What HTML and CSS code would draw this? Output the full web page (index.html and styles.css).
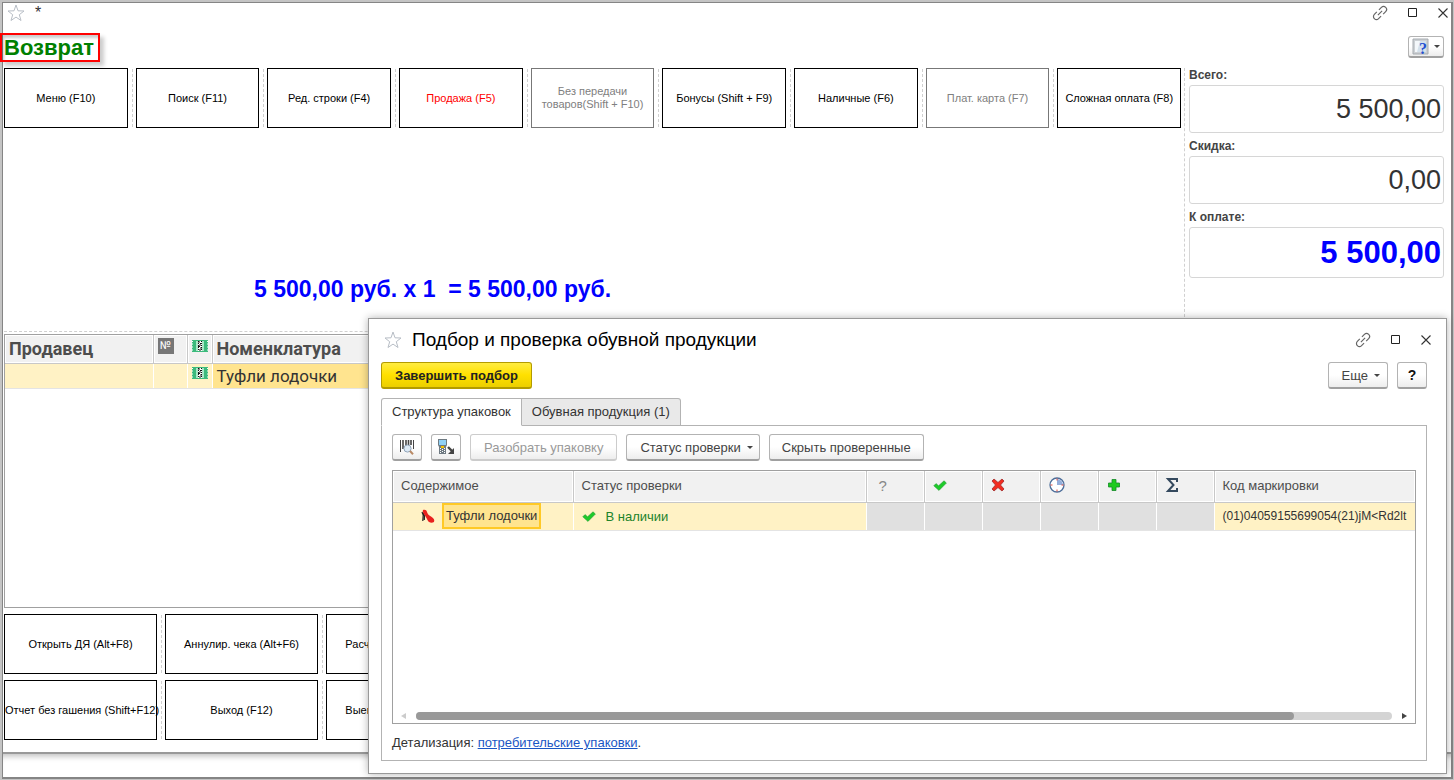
FILE: index.html
```
<!DOCTYPE html>
<html lang="ru">
<head>
  <meta charset="UTF-8" />
  <meta name="viewport" content="width=device-width, initial-scale=1.0"/>
  <title>Возврат</title>
  <link rel="stylesheet" href="styles.css">
</head>
<body>
  <svg class="sprite" aria-hidden="true">
    <symbol id="star" viewBox="0 0 18 18"><path d="M9 1l2 5.800 6 .2-4.700 3.700 1.700 5.800L9 13.100 4 16.500l1.700-5.800L1 7l6-.2z" fill="#fff" stroke="#b8bec6"/></symbol>
    <symbol id="link" viewBox="0 0 16 16"><g transform="rotate(-45 8 8)" fill="none" stroke="#666" stroke-width="1.200"><path d="M6.500 5H3a3 3 0 0 0 0 6h3.500M9.500 5H13a3 3 0 0 1 0 6H9.500M5 8h6"/></g></symbol>
    <symbol id="max" viewBox="0 0 10 10"><path d="M.5.5h8v8h-8z" fill="none" stroke="#222"/></symbol>
    <symbol id="close" viewBox="0 0 10 10"><path d="M.5.5l9 9M9.500.5l-9 9" stroke="#333" stroke-width="1.100"/></symbol>
    <symbol id="check" viewBox="0 0 14 11"><path d="M.8 5.800l2.200-2.200 2.600 2.200L11 .8l2.400 2.200L6 10.400z" fill="#1ecb2a" stroke="#2c9a3a" stroke-width=".6"/></symbol>
    <symbol id="mark" viewBox="0 0 16 12"><path d="M0 0h16v12H0z" fill="#3cba7c"/><path d="M4 1h8v10H4z" fill="#a8e6c6"/><path d="M0 1.500h1M0 4h1M0 7h1M0 10h1M15 1.500h1M15 4h1M15 7h1M15 10h1" stroke="#fff"/><path d="M6 1h4v10H6z" fill="#fff"/><path d="M6.500 1v10M9.500 1v10" stroke="#111" stroke-dasharray="1 1"/><path d="M6 2h2M8 3.500h2M7 5h2M6 6.500h2M8 8h2M7 10h2" stroke="#111"/></symbol>
  </svg>

  <div class="window">
    <header class="titlebar">
      <button class="icon-btn" aria-label="В избранное"><svg width="18" height="18"><use href="#star"/></svg></button>
      <span class="modified">*</span>
      <div class="win-controls">
        <button class="icon-btn" aria-label="Ссылка"><svg width="16" height="16"><use href="#link"/></svg></button>
        <button class="icon-btn" aria-label="Развернуть"><svg width="10" height="10"><use href="#max"/></svg></button>
        <button class="icon-btn" aria-label="Закрыть"><svg width="10" height="10"><use href="#close"/></svg></button>
      </div>
    </header>

    <div class="heading">
      <h1>Возврат</h1>
      <button class="btn help-btn" aria-label="Справка">
        <svg width="18" height="18" viewBox="0 0 18 18"><path d="M1 1h15v15H1z" fill="#ccd0d4" stroke="#a6abb0"/><path d="M3 3h10v11H3z" fill="#f4f8fb"/><path d="M8 3h6v11H5z" fill="#d4e1ec"/><text x="7" y="16" class="help-mark">?</text></svg>
        <span class="caret"></span>
      </button>
    </div>

    <main class="layout">
      <section class="sale">
        <nav class="keys">
          <button>Меню (F10)</button>
          <button>Поиск (F11)</button>
          <button>Ред. строки (F4)</button>
          <button class="active">Продажа (F5)</button>
          <button disabled>Без передачи товаров(Shift + F10)</button>
          <button>Бонусы (Shift + F9)</button>
          <button>Наличные (F6)</button>
          <button disabled>Плат. карта (F7)</button>
          <button>Сложная оплата (F8)</button>
        </nav>
        <p class="amount">5 500,00 руб. x 1&nbsp; = 5 500,00 руб.</p>
      </section>
      <aside class="totals">
        <label for="total">Всего:</label>
        <input id="total" value="5 500,00" readonly>
        <label for="discount">Скидка:</label>
        <input id="discount" value="0,00" readonly>
        <label for="topay">К оплате:</label>
        <input id="topay" class="topay" value="5 500,00" readonly>
      </aside>
    </main>

    <div class="goods">
      <table>
        <colgroup><col class="c-seller"><col class="c-num"><col class="c-mark"><col></colgroup>
        <thead>
          <tr>
            <th>Продавец</th>
            <th class="ico"><span class="num">№</span></th>
            <th class="ico"><svg width="16" height="12"><use href="#mark"/></svg></th>
            <th>Номенклатура</th>
          </tr>
        </thead>
        <tbody>
          <tr>
            <td></td>
            <td></td>
            <td class="ico"><svg width="16" height="12"><use href="#mark"/></svg></td>
            <td class="current">Туфли лодочки</td>
          </tr>
        </tbody>
      </table>
    </div>

    <nav class="keys keys-bottom">
      <button>Открыть ДЯ (Alt+F8)</button>
      <button>Аннулир. чека (Alt+F6)</button>
      <button>Расчет скидок (Alt+F7)</button>
    </nav>
    <nav class="keys keys-bottom">
      <button>Отчет без гашения (Shift+F12)</button>
      <button>Выход (F12)</button>
      <button>Выемка денег (Alt+F5)</button>
    </nav>
    <footer class="status"></footer>
  </div>

  <div class="dialog" role="dialog" aria-labelledby="dialogTitle">
    <header class="dialog-title">
      <button class="icon-btn" aria-label="В избранное"><svg width="18" height="18"><use href="#star"/></svg></button>
      <h2 id="dialogTitle">Подбор и проверка обувной продукции</h2>
      <div class="win-controls">
        <button class="icon-btn" aria-label="Ссылка"><svg width="16" height="16"><use href="#link"/></svg></button>
        <button class="icon-btn" aria-label="Развернуть"><svg width="10" height="10"><use href="#max"/></svg></button>
        <button class="icon-btn" aria-label="Закрыть"><svg width="10" height="10"><use href="#close"/></svg></button>
      </div>
    </header>
    <div class="commands">
      <button class="btn primary">Завершить подбор</button>
      <button class="btn more">Еще <span class="caret"></span></button>
      <button class="btn square help">?</button>
    </div>

    <div class="tabs">
      <button class="tab selected">Структура упаковок</button>
      <button class="tab">Обувная продукция (1)</button>
    </div>
    <div class="panel">
      <div class="toolbar">
        <button class="btn square" aria-label="Поиск по штрихкоду">
          <svg width="16" height="16" viewBox="0 0 16 16"><path d="M1.500 1v12M14.500 1v9" stroke="#444"/><path d="M4 1v9M7 1v6M9.500 1v5M12 1v5" stroke="#444" stroke-width="1.600"/><circle cx="8.500" cy="9.500" r="3.600" fill="#dce9f5" stroke="#8fa3b8"/><path d="M11 12l3 3.200" stroke="#b98a66" stroke-width="2"/></svg>
        </button>
        <button class="btn square" aria-label="Загрузить из ТСД">
          <svg width="18" height="18" viewBox="0 0 18 18"><path d="M1 1h9v6L9 9v7H2V9L1 7z" fill="#6f7a82"/><path d="M2 2h7v5H2z" fill="#8fd0f5"/><path d="M4 8h3v2H4z" fill="#f5c400"/><path d="M3 10h1v1H3zM5 11h1v1H5zM7 10h1v1H7zM3 12h1v1H3zM5 13h1v1H5zM7 12h1v1H7zM3 14h1v1H3zM7 14h1v1H7z" fill="#fff"/><path d="M11 9l4 4" stroke="#444" stroke-width="2.400"/><path d="M17 10v6h-6z" fill="#444"/></svg>
        </button>
        <button class="btn" disabled>Разобрать упаковку</button>
        <button class="btn drop">Статус проверки <span class="caret"></span></button>
        <button class="btn">Скрыть проверенные</button>
      </div>

      <div class="grid">
        <table>
          <colgroup><col class="g-name"><col class="g-status"><col class="g-ico"><col class="g-ico"><col class="g-ico"><col class="g-ico"><col class="g-ico"><col class="g-ico"><col></colgroup>
          <thead>
            <tr>
              <th>Содержимое</th>
              <th>Статус проверки</th>
              <th class="ico quest">?</th>
              <th class="ico"><svg width="14" height="11"><use href="#check"/></svg></th>
              <th class="ico"><svg width="14" height="14" viewBox="0 0 14 14"><path d="M3 1l4 3.500L11 1l2 2-3.500 4 3.500 4-2 2-4-3.500L3 13l-2-2 3.500-4L1 3z" fill="#f22c20" stroke="#a12a2a" stroke-width=".8"/></svg></th>
              <th class="ico"><svg width="16" height="16" viewBox="0 0 16 16"><circle cx="8" cy="8" r="7" fill="#fff" stroke="#4b6d99" stroke-width="1.300"/><path d="M8 8V2a6 6 0 0 1 6 6z" fill="#94aedb"/><path d="M8 1.500v2M8 12.500v2M1.500 8h2M12.500 8h2" stroke="#e14a3c"/></svg></th>
              <th class="ico"><svg width="14" height="14" viewBox="0 0 14 14"><path d="M5 1.500h4V5h3.500v4H9v3.500H5V9H1.500V5H5z" fill="#1ecb1e" stroke="#148a28" stroke-width=".8"/></svg></th>
              <th class="ico"><svg width="14" height="16" viewBox="0 0 14 16"><path d="M12 5V2H3l5.500 6L3 14h9v-3" fill="none" stroke="#34495e" stroke-width="2"/></svg></th>
              <th>Код маркировки</th>
            </tr>
          </thead>
          <tbody>
            <tr>
              <td class="name">
                <div class="item">
                  <svg width="14" height="15" viewBox="0 0 14 15"><path d="M1 3l1.200 3-.4 6M2.500 4l1 3-.2 4" fill="none" stroke="#222" stroke-width="1.200"/><path d="M2 1c2-.8 3.500 0 4 2s1.500 3 4 4.500S14 10.500 13 13c-2.500 1.500-5.500.5-6.500-2S4.500 7.500 3.500 6 1.200 2.500 2 1z" fill="#e8201e"/></svg>
                  <span class="focus">Туфли лодочки</span>
                </div>
              </td>
              <td class="status-ok"><svg width="14" height="11"><use href="#check"/></svg>В наличии</td>
              <td class="off"></td>
              <td class="off"></td>
              <td class="off"></td>
              <td class="off"></td>
              <td class="off"></td>
              <td class="off"></td>
              <td class="code">(01)04059155699054(21)jM&lt;Rd2lt</td>
            </tr>
          </tbody>
        </table>
        <div class="scroll">
          <span class="arrow left"></span>
          <div class="track"><div class="thumb"></div></div>
          <span class="arrow right"></span>
        </div>
      </div>

      <p class="details">Детализация: <a href="#">потребительские упаковки</a>.</p>
    </div>
  </div>
</body>
</html>
```
FILE: styles.css
```
* {
  box-sizing: border-box;
}
body {
  margin: 0;
  padding: 2px 1px 1px 2px;
  min-height: 100vh;
  display: flex;
  position: relative;
  background: #c4c4c4;
  color: #333;
  font-family: "Liberation Sans", Arial, sans-serif;
  font-size: 13px;
  overflow: hidden;
}
button, input {
  font: inherit;
  color: inherit;
}
h1, h2, p {
  margin: 0;
}
.sprite {
  position: absolute;
  width: 0;
  height: 0;
}
.window {
  flex: 1;
  display: flex;
  flex-direction: column;
  min-width: 0;
  background: #fff;
  border: 2px solid #858585;
  border-width: 1px 2px 2px 1px;
}
.icon-btn {
  display: flex;
  padding: 0;
  border: 0;
  background: none;
}
.titlebar {
  display: flex;
  align-items: center;
  height: 20px;
  padding: 0 3px 0 4px;
}
.modified {
  margin-left: 10px;
  font-size: 16px;
}
.win-controls {
  display: flex;
  align-items: center;
  gap: 20px;
  margin-left: auto;
}

/* heading */
.heading {
  display: flex;
  justify-content: space-between;
  align-items: center;
  height: 45px;
  padding: 3px 7px 0 0;
}
h1 {
  margin-left: -3px;
  padding: 1px 4px 0 2px;
  border: 2px solid #f00;
  box-shadow: 4px 4px 4px rgba(0, 0, 0, 0.2), inset 2px 3px 3px rgba(0, 0, 0, 0.2);
  color: #008000;
  font-size: 22px;
  line-height: 24px;
}
.btn {
  display: flex;
  align-items: center;
  justify-content: center;
  height: 27px;
  padding: 0 13px;
  border: 1px solid #b3b3b3;
  border-bottom: 2px solid #a0a0a0;
  border-radius: 3px;
  background: linear-gradient(#fff 50%, #ededed);
  color: #444;
  white-space: nowrap;
}
.btn:disabled {
  color: #999;
  border-color: #ccc;
}
.help-btn {
  height: 22px;
  padding: 0 3px;
}
.help-btn .caret {
  margin-left: 4px;
}
.help-mark {
  fill: #1f4fd0;
  font: bold 16px "Liberation Serif", serif;
}
.caret {
  margin-left: 6px;
  border: 3px solid transparent;
  border-top-color: #444;
  border-bottom: 0;
}

/* sale area */
.layout {
  display: flex;
  padding: 0 7px 0 1px;
}
.sale {
  flex: 1;
  display: flex;
  flex-direction: column;
  height: 264px;
  padding-right: 3px;
  border-bottom: 1px dashed #d0d0d0;
}
.keys {
  display: flex;
}
.keys button {
  flex: 1;
  position: relative;
  height: 60px;
  padding: 0;
  border: 1px solid #000;
  background: #fff;
  color: #000;
  font-size: 11px;
  line-height: 13px;
}
.keys button + button {
  margin-left: 8px;
}
.keys button + button::before {
  content: "";
  position: absolute;
  left: -5px;
  top: 0;
  bottom: 0;
  border-left: 1px dashed #d0d0d0;
}
.keys .active {
  color: #f00;
}
.keys button:disabled {
  border-color: #777;
  color: #808080;
}
.amount {
  margin: auto 0 29px 250px;
  color: #00f;
  font-size: 23px;
  line-height: 26px;
  font-weight: bold;
}
.totals {
  display: flex;
  flex-direction: column;
  width: 260px;
  padding-left: 4px;
  border-left: 1px dashed #d0d0d0;
}
.totals label {
  height: 17px;
  color: #444;
  font-size: 12px;
  line-height: 14px;
  font-weight: bold;
}
.totals input {
  width: 100%;
  height: 48px;
  margin-bottom: 6px;
  padding: 0 2px;
  border: 1px solid #d6d6d6;
  border-radius: 3px;
  color: #333;
  font-size: 27px;
  text-align: right;
}
.totals .topay {
  height: 51px;
  color: #00f;
  font-size: 31px;
  font-weight: bold;
}

table {
  width: 100%;
  border-collapse: collapse;
  table-layout: fixed;
}
th {
  background: #f1f1f1;
  border-right: 1px solid #c8c8c8;
  box-shadow: inset 0 0 0 1px #fff;
  color: #4d4d4d;
  text-align: left;
  white-space: nowrap;
}
td {
  background: #fff2c5;
  border-right: 1px solid #fff;
  white-space: nowrap;
}

/* goods in the receipt */
.goods {
  flex: 1;
  margin: 2px 7px 0 1px;
  border: 1px solid #a0a0a0;
}
.goods th, .goods td {
  height: 28px;
  padding: 0 4px;
  font-family: Roboto, sans-serif;
  font-size: 17px;
}
.goods th {
  font-size: 18px;
  line-height: 20px;
  border-bottom: 1px solid #c8c8c8;
}
.goods td {
  height: 25px;
  border-bottom: 1px solid #e4e4e4;
}
.goods .current {
  background: #ffe48f;
}
.goods .ico {
  padding-top: 3px;
  vertical-align: top;
}
.goods svg {
  display: block;
}
.goods th svg {
  margin-top: 2px;
}
.c-seller {
  width: 148px;
}
.c-num {
  width: 34px;
}
.c-mark {
  width: 25px;
}
.num {
  display: block;
  width: 16px;
  height: 16px;
  background: #777;
  color: #fff;
  font-size: 11px;
  line-height: 16px;
  font-weight: normal;
  text-align: center;
}
.keys-bottom {
  margin: 6px 0 0 1px;
}
.keys-bottom button {
  flex: 0 0 153px;
  min-width: 0;
  white-space: nowrap;
}
.status {
  height: 25px;
  margin-top: 12px;
  border-top: 2px solid #999;
  box-shadow: inset 0 7px 6px -5px #bbb;
}

/* dialog window */
.dialog {
  position: absolute;
  left: 368px;
  top: 318px;
  right: 7px;
  bottom: 6px;
  display: flex;
  flex-direction: column;
  padding: 0 19px 12px 12px;
  border: 1px solid #999;
  background: #fff;
  box-shadow: 0 0 8px rgba(0, 0, 0, 0.3);
}
.dialog-title {
  display: flex;
  align-items: center;
  height: 43px;
  padding: 0 0 2px 3px;
}
.dialog-title .win-controls {
  margin-right: -4px;
}
h2 {
  margin-left: 10px;
  color: #000;
  font-size: 19px;
  font-weight: normal;
}
.commands {
  display: flex;
  gap: 9px;
}
.primary {
  border-color: #b39b00;
  background: linear-gradient(#ffec40, #ffe000 50%, #eccf00);
  color: #222;
  font-weight: bold;
}
.more {
  margin-left: auto;
  padding: 0 7px 0 13px;
}
.square {
  width: 30px;
  padding: 0;
}
.help {
  color: #111;
  font-size: 14px;
  font-weight: bold;
}
.tabs {
  display: flex;
  position: relative;
  z-index: 1;
  margin-top: 9px;
}
.tab {
  height: 28px;
  padding: 0 10px 2px;
  border: 1px solid #b3b3b3;
  border-left: 0;
  border-radius: 0 3px 0 0;
  background: #e9e9e9;
}
.tab.selected {
  border-left: 1px solid #b3b3b3;
  border-bottom-color: #fff;
  border-radius: 3px 0 0 0;
  background: #fff;
}
.panel {
  flex: 1;
  display: flex;
  flex-direction: column;
  margin-top: -1px;
  padding: 8px 10px 9px;
  border: 1px solid #b3b3b3;
}
.toolbar {
  display: flex;
  gap: 9px;
}
.toolbar .btn {
  padding: 0 12px;
}
.toolbar .btn:disabled {
  padding: 0 13px;
}
.toolbar .square {
  padding: 0;
}
.toolbar .drop {
  padding: 0 6px 0 13px;
}
.grid {
  flex: 1;
  display: flex;
  flex-direction: column;
  margin-top: 9px;
  border: 1px solid #a0a0a0;
}
.grid th, .grid td {
  height: 31px;
  padding: 0 8px;
  font-weight: normal;
  overflow: hidden;
}
.grid th {
  padding-bottom: 2px;
  border-bottom: 1px solid #c8c8c8;
}
.grid td {
  height: 28px;
  border-top: 1px solid #fff;
  border-bottom: 1px solid #e4e4e4;
}
.grid th:last-child, .grid td:last-child {
  padding-right: 0;
  border-right: 0;
}
.grid .name {
  padding: 0;
}
.grid .off {
  background: #e0e0e0;
}
.grid .code {
  font-size: 12px;
}
.grid svg {
  display: block;
}
.grid .quest {
  padding-left: 12px;
  color: #888;
  font-size: 15px;
}
.g-name {
  width: 180px;
}
.g-status {
  width: 293px;
}
.g-ico {
  width: 58px;
}
.item {
  display: flex;
  align-items: center;
  gap: 7px;
  padding-left: 28px;
}
.focus {
  padding: 0 2px;
  border: 2px solid #ffc926;
  background: #ffe48f;
  line-height: 22px;
}
.status-ok {
  color: #21832b;
}
.grid .status-ok svg {
  display: inline-block;
  margin-right: 10px;
  vertical-align: -1px;
}
.scroll {
  display: flex;
  align-items: center;
  gap: 10px;
  margin-top: auto;
  padding: 3px 8px;
}
.track {
  flex: 1;
  height: 8px;
  border-radius: 4px;
  background: #d4d4d4;
}
.thumb {
  width: 90%;
  height: 8px;
  border-radius: 4px;
  background: #999;
}
.arrow {
  border: 3px solid transparent;
}
.left {
  border-left: 0;
  border-right: 5px solid #ccc;
}
.right {
  border-right: 0;
  border-left: 5px solid #444;
}
.details {
  margin-top: 11px;
  line-height: 16px;
}
.details a {
  color: #1a56c4;
}
```
